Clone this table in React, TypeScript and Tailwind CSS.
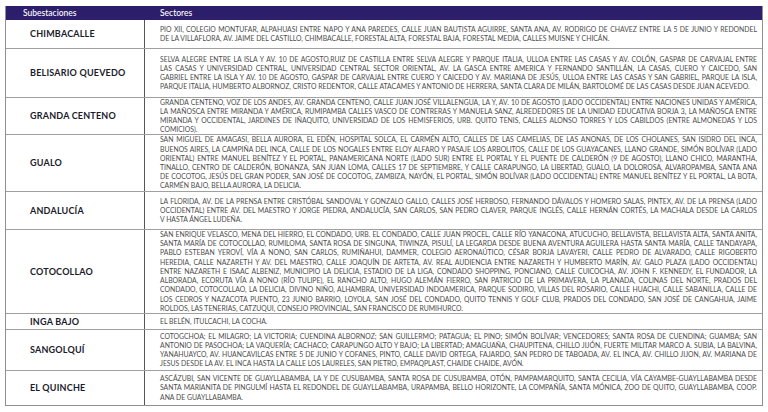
type Row = {
  name: string
  h: string
  lines: string[]
}

const rows: Row[] = [
  {
    name: 'CHIMBACALLE',
    h: 'h-[28px]',
    lines: [
      'PIO XII, COLEGIO MONTUFAR, ALPAHUASI ENTRE NAPO Y ANA PAREDES, CALLE JUAN BAUTISTA AGUIRRE, SANTA ANA, AV. RODRIGO DE CHAVEZ ENTRE LA 5 DE JUNIO Y REDONDEL',
      'DE LA VILLAFLORA, AV. JAIME DEL CASTILLO, CHIMBACALLE, FORESTAL ALTA, FORESTAL BAJA, FORESTAL MEDIA, CALLES MUISNE Y CHICÁN.',
    ],
  },
  {
    name: 'BELISARIO QUEVEDO',
    h: 'h-[49px]',
    lines: [
      'SELVA ALEGRE ENTRE LA ISLA Y AV. 10 DE AGOSTO,RUIZ DE CASTILLA ENTRE SELVA ALEGRE Y PARQUE ITALIA, ULLOA ENTRE LAS CASAS Y AV. COLÓN, GASPAR DE CARVAJAL ENTRE',
      'LAS CASAS Y UNIVERSIDAD CENTRAL, UNIVERSIDAD CENTRAL SECTOR ORIENTAL, AV. LA GASCA ENTRE AMERICA Y FERNANDO SANTILLÁN, LA CASAS, CUERO Y CAICEDO, SAN',
      'GABRIEL ENTRE LA ISLA Y AV. 10 DE AGOSTO, GASPAR DE CARVAJAL ENTRE CUERO Y CAICEDO Y AV. MARIANA DE JESÚS, ULLOA ENTRE LAS CASAS Y SAN GABRIEL, PARQUE LA ISLA,',
      'PARQUE ITALIA, HUMBERTO ALBORNOZ, CRISTO REDENTOR, CALLE ATACAMES Y ANTONIO DE HERRERA, SANTA CLARA DE MILÁN, BARTOLOMÉ DE LAS CASAS DESDE JUAN ACEVEDO.',
    ],
  },
  {
    name: 'GRANDA CENTENO',
    h: 'h-[37px]',
    lines: [
      'GRANDA CENTENO, VOZ DE LOS ANDES, AV. GRANDA CENTENO, CALLE JUAN JOSÉ VILLALENGUA, LA Y, AV. 10 DE AGOSTO (LADO OCCIDENTAL) ENTRE NACIONES UNIDAS Y AMÉRICA,',
      'LA MAÑOSCA ENTRE MIRANDA Y AMÉRICA, RUMIPAMBA CALLES VASCO DE CONTRERAS Y MANUELA SANZ, ALREDEDORES DE LA UNIDAD EDUCATIVA BORJA 3, LA MAÑOSCA ENTRE',
      'MIRANDA Y OCCIDENTAL, JARDINES DE IÑAQUITO, UNIVERSIDAD DE LOS HEMISFERIOS, URB. QUITO TENIS, CALLES ALONSO TORRES Y LOS CABILDOS (ENTRE ALMONEDAS Y LOS',
      'COMICIOS).',
    ],
  },
  {
    name: 'GUALO',
    h: 'h-[57px]',
    lines: [
      'SAN MIGUEL DE AMAGASI, BELLA AURORA, EL EDÉN, HOSPITAL SOLCA, EL CARMÉN ALTO, CALLES DE LAS CAMELIAS, DE LAS ANONAS, DE LOS CHOLANES, SAN ISIDRO DEL INCA,',
      'BUENOS AIRES, LA CAMPIÑA DEL INCA, CALLE DE LOS NOGALES ENTRE ELOY ALFARO Y PASAJE LOS ARBOLITOS, CALLE DE LOS GUAYACANES, LLANO GRANDE, SIMÓN BOLÍVAR (LADO',
      'ORIENTAL) ENTRE MANUEL BENÍTEZ Y EL PORTAL, PANAMERICANA NORTE (LADO SUR) ENTRE EL PORTAL Y EL PUENTE DE CALDERÓN (9 DE AGOSTO), LLANO CHICO, MARANTHA,',
      'TINALLO, CENTRO DE CALDERÓN, BONANZA, SAN JUAN LOMA, CALLES 17 DE SEPTIEMBRE, Y CALLE CARAPUNGO, LA LIBERTAD, GUALO, LA DOLOROSA, ALVAROPAMBA, SANTA ANA',
      'DE COCOTOG, JESÚS DEL GRAN PODER, SAN JOSÉ DE COCOTOG, ZAMBIZA, NAYÓN, EL PORTAL, SIMÓN BOLÍVAR (LADO OCCIDENTAL) ENTRE MANUEL BENÍTEZ Y EL PORTAL, LA BOTA,',
      'CARMÉN BAJO, BELLA AURORA, LA DELICIA.',
    ],
  },
  {
    name: 'ANDALUCÍA',
    h: 'h-[38px]',
    lines: [
      'LA FLORIDA, AV. DE LA PRENSA ENTRE CRISTÓBAL SANDOVAL Y GONZALO GALLO, CALLES JOSÉ HERBOSO, FERNANDO DÁVALOS Y HOMERO SALAS, PINTEX, AV. DE LA PRENSA (LADO',
      'OCCIDENTAL) ENTRE AV. DEL MAESTRO Y JORGE PIEDRA, ANDALUCÍA, SAN CARLOS, SAN PEDRO CLAVER, PARQUE INGLÉS, CALLE HERNÁN CORTÉS, LA MACHALA DESDE LA CARLOS',
      'V HASTA ÁNGEL LUDEÑA.',
    ],
  },
  {
    name: 'COTOCOLLAO',
    h: 'h-[84px]',
    lines: [
      'SAN ENRIQUE VELASCO, MENA DEL HIERRO, EL CONDADO, URB. EL CONDADO, CALLE JUAN PROCEL, CALLE RÍO YANACONA, ATUCUCHO, BELLAVISTA, BELLAVISTA ALTA, SANTA ANITA,',
      'SANTA MARÍA DE COTOCOLLAO, RUMILOMA, SANTA ROSA DE SINGUNA, TIWINZA, PISULÍ, LA LEGARDA DESDE BUENA AVENTURA AGUILERA HASTA SANTA MARÍA, CALLE TANDAYAPA,',
      'PABLO ESTEBAN YEROVÍ, VÍA A NONO, SAN CARLOS, RUMIÑAHUI, DAMMER, COLEGIO AERONAÚTICO, CÉSAR BORJA LAVAYERI, CALLE PEDRO DE ALVARADO, CALLE RIGOBERTO',
      'HEREDIA, CALLE NAZARETH Y AV. DEL MAESTRO, CALLE JOAQUÍN DE ARTETA, AV. REAL AUDIENCIA ENTRE NAZARETH Y HUMBERTO MARÍN, AV. GALO PLAZA (LADO OCCIDENTAL)',
      'ENTRE NAZARETH E ISAAC ALBENIZ, MUNICIPIO LA DELICIA, ESTADIO DE LA LIGA, CONDADO SHOPPING, PONCIANO, CALLE CUICOCHA, AV. JOHN F. KENNEDY, EL FUNDADOR, LA',
      'ALBORADA, ECORUTA VÍA A NONO (RÍO TULIPE), EL RANCHO ALTO, HUGO ALEMÁN FIERRO, SAN PATRICIO DE LA PRIMAVERA, LA PLANADA, COLINAS DEL NORTE, PRADOS DEL',
      'CONDADO, COTOCOLLAO, LA DELICIA, DIVINO NIÑO, ALHAMBRA, UNIVERSIDAD INDOAMERICA, PARQUE SODIRO, VILLAS DEL ROSARIO, CALLE HUACHI, CALLE SABANILLA, CALLE DE',
      'LOS CEDROS Y NAZACOTA PUENTO, 23 JUNIO BARRIO, LOYOLA, SAN JOSÉ DEL CONDADO, QUITO TENNIS Y GOLF CLUB, PRADOS DEL CONDADO, SAN JOSÉ DE CANGAHUA, JAIME',
      'ROLDOS, LAS TENERIAS, CATZUQUI, CONSEJO PROVINCIAL, SAN FRANCISCO DE RUMIHURCO.',
    ],
  },
  {
    name: 'INGA BAJO',
    h: 'h-[16px]',
    lines: ['EL BELÉN, ITULCACHI, LA COCHA.'],
  },
  {
    name: 'SANGOLQUÍ',
    h: 'h-[41px]',
    lines: [
      'COTOGCHOA; EL MILAGRO; LA VICTORIA; CUENDINA ALBORNOZ; SAN GUILLERMO; PATAGUA; EL PINO; SIMÓN BOLÍVAR; VENCEDORES; SANTA ROSA DE CUENDINA; GUAMBA; SAN',
      'ANTONIO DE PASOCHOA; LA VAQUERÍA; CACHACO; CARAPUNGO ALTO Y BAJO; LA LIBERTAD; AMAGUAÑA, CHAUPITENA, CHILLO JIJÓN, FUERTE MILITAR MARCO A. SUBIA, LA BALVINA,',
      'YANAHUAYCO, AV. HUANCAVILCAS ENTRE 5 DE JUNIO Y COFANES, PINTO, CALLE DAVID ORTEGA, FAJARDO, SAN PEDRO DE TABOADA, AV. EL INCA, AV. CHILLO JIJON, AV. MARIANA DE',
      'JESUS DESDE LA AV. EL INCA HASTA LA CALLE LOS LAURELES, SAN PIETRO, EMPAQPLAST, CHAIDE CHAIDE, AVÓN.',
    ],
  },
  {
    name: 'EL QUINCHE',
    h: 'h-[35px]',
    lines: [
      'ASCÁZUBI, SAN VICENTE DE GUAYLLABAMBA, LA Y DE CUSUBAMBA, SANTA ROSA DE CUSUBAMBA, OTÓN, PAMPAMARQUITO, SANTA CECILIA, VÍA CAYAMBE-GUAYLLABAMBA DESDE',
      'SANTA MARIANITA DE PINGULMÍ HASTA EL REDONDEL DE GUAYLLABAMBA, URAPAMBA, BELLO HORIZONTE, LA COMPAÑÍA, SANTA MÓNICA, ZOO DE QUITO, GUAYLLABAMBA, COOP.',
      'ANA DE GUAYLLABAMBA.',
    ],
  },
]

export default function App() {
  return (
    <div className="w-[768px] h-[412px] bg-white pt-[6px] pl-[5px] font-['Lato',sans-serif] overflow-hidden">
      <div className="w-[758px] border-x border-b border-[#8f8f8f]">
        <div className="flex h-[14px] bg-[#2d1e6b] text-white text-[8.5px] font-medium">
          <div className="w-[139px] pl-[17px] flex items-center">Subestaciones</div>
          <div className="flex-1 pl-[15px] flex items-center">Sectores</div>
        </div>
        {rows.map((r, i) => (
          <div
            key={r.name}
            className={`flex ${r.h} ${i === 0 ? '' : 'border-t border-[#a0a0a0]'}`}
          >
            <div className="w-[139px] shrink-0 border-r border-[#555] flex items-center pl-[24px] text-[9px] font-bold text-[#1b1b2b] tracking-[0.2px]">
              {r.name}
            </div>
            <div className="flex-1 min-w-0 flex flex-col justify-center pl-[15px] pr-[5px] text-[6.85px] leading-[9.2px] text-[#4d4d4d]">
              {r.lines.map((l, j) => (
                <div
                  key={j}
                  className={
                    j < r.lines.length - 1
                      ? 'whitespace-nowrap text-justify [text-align-last:justify]'
                      : 'whitespace-nowrap'
                  }
                >
                  {l}
                </div>
              ))}
            </div>
          </div>
        ))}
      </div>
    </div>
  )
}
